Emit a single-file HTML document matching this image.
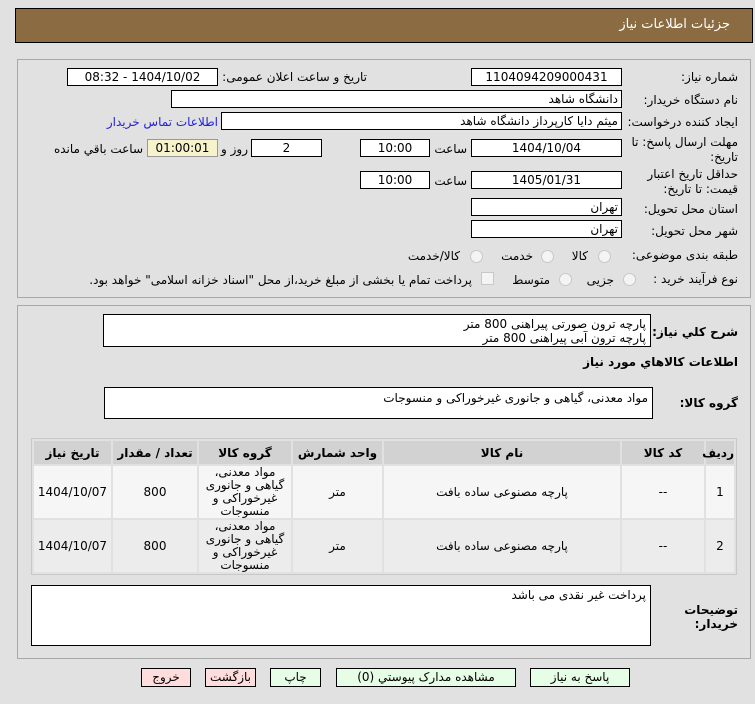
<!DOCTYPE html>
<html><head><meta charset="utf-8"><style>
body{margin:0;width:755px;height:704px;background:#e1e1e1;font-family:"DejaVu Sans","Liberation Sans",sans-serif;font-size:12px;color:#000;position:relative;overflow:hidden}
.a{position:absolute}
.hdr{left:15px;top:8px;width:736px;height:33px;background:#8b6b42;border:1px solid #000}
.hdr span{position:absolute;right:22px;top:8px;color:#fff;font-size:13px}
.pan{left:17px;width:732px;border:1px solid #a8a8a8;background:#e1e1e1}
.f{position:absolute;background:#fff;border:1px solid #000;height:16px;line-height:16px;text-align:center;direction:rtl;box-sizing:content-box}
.r{text-align:right;padding-right:3px}
.l{position:absolute;direction:rtl;white-space:nowrap}
.rad{position:absolute;width:11px;height:11px;border-radius:50%;border:1px solid #c8c8c8;background:#f4f4f4}
.ta{position:absolute;background:#fff;border:1px solid #000;direction:rtl;text-align:right;padding:2px 4px;box-sizing:border-box;line-height:14px}
.b{font-weight:bold}
table{position:absolute;left:31px;top:438px;width:706px;border-collapse:separate;border-spacing:2px;background:#e1e1e1;border:1px solid #c8c8c8;direction:rtl;table-layout:fixed}
th{background:#d2d2d2;height:23px;font-weight:bold;font-size:12px;padding:0}
td{background:#f6f6f6;text-align:center;height:52px;padding:0;font-size:12px;line-height:13px}
tr.e td{background:#ececec}
.btn{position:absolute;top:668px;height:17px;border:1px solid #000;background:#e6fde6;text-align:center;line-height:17px;direction:rtl}
</style></head><body>
<div class="a hdr"><span>جزئیات اطلاعات نیاز</span></div>
<div class="a pan" style="top:59px;height:237px"></div>
<div class="a pan" style="top:305px;height:352px"></div>

<div class="l" style="right:17px;top:70px">شماره نیاز:</div>
<div class="f" style="left:471px;top:68px;width:149px">1104094209000431</div>
<div class="l" style="right:388px;top:70px">تاریخ و ساعت اعلان عمومی:</div>
<div class="f" style="left:67px;top:68px;width:149px">1404/10/02 - 08:32</div>

<div class="l" style="right:17px;top:93px">نام دستگاه خریدار:</div>
<div class="f r" style="left:171px;top:90px;width:446px">دانشگاه شاهد</div>

<div class="l" style="right:17px;top:115px">ایجاد کننده درخواست:</div>
<div class="f r" style="left:221px;top:112px;width:396px">میثم دایا کارپرداز دانشگاه شاهد</div>
<div class="l" style="right:537px;top:115px;color:#2222dd">اطلاعات تماس خریدار</div>

<div class="l" style="right:17px;top:135px">مهلت ارسال پاسخ: تا</div>
<div class="l" style="right:17px;top:150px">تاریخ:</div>
<div class="f" style="left:471px;top:139px;width:149px">1404/10/04</div>
<div class="l" style="right:288px;top:142px">ساعت</div>
<div class="f" style="left:360px;top:139px;width:68px">10:00</div>
<div class="f" style="left:251px;top:139px;width:69px">2</div>
<div class="l" style="right:507px;top:142px">روز و</div>
<div class="f" style="left:147px;top:139px;width:69px;background:#f5f2cc;border-color:#999">01:00:01</div>
<div class="l" style="right:612px;top:142px">ساعت باقي مانده</div>

<div class="l" style="right:17px;top:167px">حداقل تاریخ اعتبار</div>
<div class="l" style="right:17px;top:182px">قیمت: تا تاریخ:</div>
<div class="f" style="left:471px;top:171px;width:149px">1405/01/31</div>
<div class="l" style="right:288px;top:174px">ساعت</div>
<div class="f" style="left:360px;top:171px;width:68px">10:00</div>

<div class="l" style="right:17px;top:202px">استان محل تحویل:</div>
<div class="f r" style="left:471px;top:198px;width:146px">تهران</div>
<div class="l" style="right:17px;top:224px">شهر محل تحویل:</div>
<div class="f r" style="left:471px;top:220px;width:146px">تهران</div>

<div class="l" style="right:17px;top:248px">طبقه بندی موضوعی:</div>
<div class="rad" style="left:598px;top:250px"></div><div class="l" style="right:167px;top:249px">کالا</div>
<div class="rad" style="left:541px;top:250px"></div><div class="l" style="right:222px;top:249px">خدمت</div>
<div class="rad" style="left:470px;top:250px"></div><div class="l" style="right:295px;top:249px">کالا/خدمت</div>

<div class="l" style="right:17px;top:272px">نوع فرآیند خرید :</div>
<div class="rad" style="left:623px;top:273px"></div><div class="l" style="right:141px;top:273px">جزیی</div>
<div class="rad" style="left:559px;top:273px"></div><div class="l" style="right:205px;top:273px">متوسط</div>
<div class="a" style="left:481px;top:272px;width:11px;height:11px;border:1px solid #c8c8c8;background:#f4f4f4"></div>
<div class="l" style="right:283px;top:273px">پرداخت تمام یا بخشی از مبلغ خرید،از محل "اسناد خزانه اسلامی" خواهد بود.</div>

<div class="l b" style="right:17px;top:325px">شرح كلي نیاز:</div>
<div class="ta" style="left:103px;top:314px;width:548px;height:33px">پارچه ترون صورتی پیراهنی 800 متر<br>پارچه ترون آبی پیراهنی 800 متر</div>
<div class="l b" style="right:17px;top:355px">اطلاعات كالاهاي مورد نیاز</div>
<div class="l b" style="right:17px;top:396px">گروه کالا:</div>
<div class="ta" style="left:104px;top:387px;width:549px;height:32px;padding-top:3px">مواد معدنی، گیاهی و جانوری غیرخوراکی و منسوجات</div>

<table>
<colgroup><col style="width:28px"><col style="width:82px"><col style="width:236px"><col style="width:89px"><col style="width:92px"><col style="width:84px"><col></colgroup>
<tr><th>ردیف</th><th>کد کالا</th><th>نام کالا</th><th>واحد شمارش</th><th>گروه کالا</th><th>تعداد / مقدار</th><th>تاریخ نیاز</th></tr>
<tr><td>1</td><td>--</td><td>پارچه مصنوعی ساده بافت</td><td>متر</td><td>مواد معدنی،<br>گیاهی و جانوری<br>غیرخوراکی و<br>منسوجات</td><td>800</td><td>1404/10/07</td></tr>
<tr class="e"><td>2</td><td>--</td><td>پارچه مصنوعی ساده بافت</td><td>متر</td><td>مواد معدنی،<br>گیاهی و جانوری<br>غیرخوراکی و<br>منسوجات</td><td>800</td><td>1404/10/07</td></tr>
</table>

<div class="l b" style="right:17px;top:603px">توضیحات</div>
<div class="l b" style="right:17px;top:617px">خریدار:</div>
<div class="ta" style="left:31px;top:585px;width:620px;height:61px">پرداخت غیر نقدی می باشد</div>

<div class="btn" style="left:530px;width:98px">پاسخ به نیاز</div>
<div class="btn" style="left:336px;width:178px">مشاهده مدارک پیوستي (0)</div>
<div class="btn" style="left:270px;width:49px">چاپ</div>
<div class="btn" style="left:205px;width:49px;background:#fdd">بازگشت</div>
<div class="btn" style="left:141px;width:48px;background:#fdd">خروج</div>
</body></html>
